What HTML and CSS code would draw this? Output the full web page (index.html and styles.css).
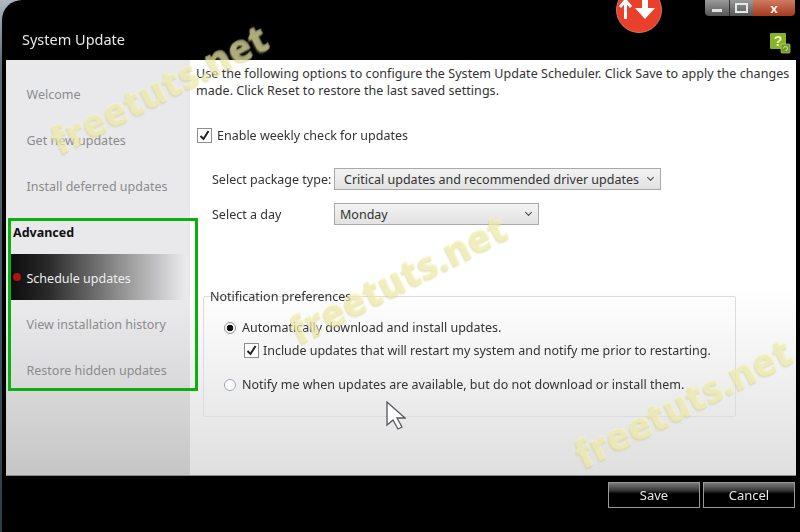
FILE: index.html
```html
<!DOCTYPE html>
<html lang="en">

<head>
    <meta charset="UTF-8">
    <title>System Update</title>
    <link rel="stylesheet" href="styles.css">
</head>

<body>
    <div class="window">
        <header class="titlebar">
            <h1 class="title">System Update</h1>
            <div class="badge">
                <svg width="46" height="46" viewBox="0 0 46 46">
                    <circle cx="23" cy="23" r="22.5" fill="#e8402a" stroke="#f08a70" stroke-width=".8" />
                    <path d="M9.5 32V14M4 20l5.5-6.5L15 20" fill="none" stroke="#fff" stroke-width="3" />
                    <path d="M26 8h6v13h7L29 32 19 21h7z" fill="#fff" />
                </svg>
            </div>
            <div class="controls">
                <span class="ctl ctl-min"><i></i></span>
                <span class="ctl ctl-max"><i></i></span>
                <span class="ctl ctl-close">x</span>
            </div>
            <svg class="help" width="22" height="22" viewBox="0 0 22 22">
                <rect x="1" y="1" width="16" height="16" rx="1" fill="#86b32a" />
                <text x="9" y="14" text-anchor="middle" class="help-mark">?</text>
                <rect x="12" y="12" width="9" height="9" rx="1" fill="#6d9a22" stroke="#cfe39a" stroke-width=".6" />
                <path d="M14.5 16.5a2 2 0 1 1 2 2" fill="none" stroke="#dfeeb5" stroke-width="1" />
            </svg>
        </header>

        <div class="body">
            <nav class="sidebar">
                <a class="nav-item">Welcome</a>
                <a class="nav-item">Get new updates</a>
                <a class="nav-item">Install deferred updates</a>
                <div class="nav-head">Advanced</div>
                <a class="nav-item selected">Schedule updates</a>
                <a class="nav-item">View installation history</a>
                <a class="nav-item">Restore hidden updates</a>
            </nav>

            <main class="main">
                <p class="intro">Use the following options to configure the System Update Scheduler. Click Save to apply the changes made. Click Reset to restore the last saved settings.</p>

                <label class="check-row weekly"><span class="check"><svg width="11" height="11" viewBox="0 0 11 11"><path d="M1.5 6l3 3 5-8" fill="none" stroke="#222" stroke-width="2" /></svg></span>Enable weekly check for updates</label>

                <div class="field package">
                    <span class="field-label">Select package type:</span>
                    <div class="select select-wide">Critical updates and recommended driver updates<span class="arrow"></span></div>
                </div>
                <div class="field day">
                    <span class="field-label">Select a day</span>
                    <div class="select select-day">Monday<span class="arrow"></span></div>
                </div>

                <section class="group">
                    <div class="legend">Notification preferences</div>
                    <label class="radio-row"><span class="radio on"></span>Automatically download and install updates.</label>
                    <label class="check-row nested"><span class="check"><svg width="11" height="11" viewBox="0 0 11 11"><path d="M1.5 6l3 3 5-8" fill="none" stroke="#222" stroke-width="2" /></svg></span>Include updates that will restart my system and notify me prior to restarting.</label>
                    <label class="radio-row second"><span class="radio"></span>Notify me when updates are available, but do not download or install them.</label>
                </section>
            </main>
        </div>

        <footer class="footer">
            <button class="btn">Save</button>
            <button class="btn">Cancel</button>
        </footer>
    </div>

    <!-- things lying over the window -->
    <div class="highlight"></div>
    <svg class="cursor" width="20" height="30" viewBox="0 0 20 30">
        <path d="M1 1v23l6-5 5 9 4-2-5-9h8z" fill="#fff" stroke="#55585c" stroke-width="1.3" />
    </svg>
    <div class="mark mark-1">freetuts.net</div>
    <div class="mark mark-2">freetuts.net</div>
    <div class="mark mark-3">freetuts.net</div>
</body>

</html>
```

FILE: styles.css
```css
html,
body {
    margin: 0;
    padding: 0;
}

body {
    width: 800px;
    height: 532px;
    overflow: hidden;
    position: relative;
    background: linear-gradient(#aeb8c0 0, #5c6c78 12%, #2c3d4a 100%);
    font-family: "Noto Sans", "Open Sans", sans-serif;
    font-size: 12.5px;
    color: #333;
}

.window {
    height: 532px;
    margin-left: 2px;
    display: flex;
    flex-direction: column;
    background: #000;
    border-top-left-radius: 20px;
    overflow: hidden;
    filter: blur(.35px);
}

.titlebar {
    height: 60px;
    flex: none;
    position: relative;
}

.title {
    margin: 0;
    padding: 29px 0 0 20px;
    font-size: 14.5px;
    font-weight: 400;
    color: #e8e8e8;
}

.badge {
    position: absolute;
    left: 614px;
    top: -13px;
    width: 46px;
    height: 46px;
}

.controls {
    position: absolute;
    left: 703px;
    top: 0;
    width: 90px;
    height: 16px;
    display: flex;
    border-radius: 0 0 4px 4px;
}

.ctl {
    height: 16px;
    display: flex;
    align-items: center;
    justify-content: center;
    background: linear-gradient(#9a9a9a, #555);
}

.ctl-min {
    width: 24px;
    border-bottom-left-radius: 4px;
}

.ctl-min i {
    width: 10px;
    height: 3px;
    margin-top: 5px;
    background: #e2e2e2;
}

.ctl-max {
    width: 23px;
    border-left: 1px solid #333;
}

.ctl-max i {
    width: 9px;
    height: 6px;
    border: 2px solid #e8e8e8;
}

.ctl-close {
    flex: 1;
    background: linear-gradient(#cf7a60, #a63a1d);
    border-bottom-right-radius: 4px;
    color: #f4ece6;
    font-weight: 700;
    font-size: 13px;
    line-height: 16px;
}

.help {
    position: absolute;
    left: 767px;
    top: 32px;
}

.help-mark {
    font-family: "Liberation Sans", sans-serif;
    font-size: 14px;
    font-weight: 700;
    fill: #f4f8c0;
}

.body {
    flex: none;
    height: 416px;
    display: flex;
    margin: 0 4px 0 4px;
    border-bottom: 1px solid #8a8a8a;
    box-sizing: border-box;
}

.sidebar {
    width: 184px;
    flex: none;
    box-sizing: border-box;
    padding-top: 10px;
    background: linear-gradient(#e9e9ec 0, #e9e9ec 60%, #c6c6c6 100%);
}

.nav-item,
.nav-head {
    display: block;
    height: 46px;
    line-height: 50px;
    box-sizing: border-box;
    padding-left: 20.5px;
    color: #8b8b8d;
    white-space: nowrap;
}

.nav-head {
    padding-left: 7px;
    color: #111;
    font-weight: 700;
}

.nav-item.selected {
    position: relative;
    margin-left: 2px;
    padding-left: 18.5px;
    color: #eee;
    background: linear-gradient(90deg, #0a0a0a 0, #2a2a2a 22%, #8c8c8c 60%, #e9e9ec 97%);
}

.nav-item.selected::before {
    content: "";
    position: absolute;
    left: 5px;
    top: 19px;
    width: 8px;
    height: 8px;
    border-radius: 50%;
    background: #b01010;
}

.main {
    flex: 1;
    box-sizing: border-box;
    padding: 5px 0 0 6px;
    background: linear-gradient(#fff 0, #fff 55%, #dfdfdf 100%);
}

.intro {
    margin: 0;
    line-height: 17px;
    letter-spacing: .05px;
}

.check-row,
.radio-row {
    display: flex;
    align-items: center;
    white-space: nowrap;
}

.check {
    width: 13px;
    height: 13px;
    flex: none;
    display: flex;
    align-items: center;
    justify-content: center;
    border: 1px solid #8e8e8e;
    background: #fff;
    margin-right: 5px;
}

.weekly {
    margin: 29px 0 0 1px;
    height: 15px;
}

.field {
    display: flex;
    align-items: center;
    height: 22px;
}

.package {
    margin-top: 25px;
}

.day {
    margin-top: 13px;
}

.field-label {
    width: 122px;
    flex: none;
    margin-left: 16px;
    white-space: nowrap;
}

.select {
    height: 22px;
    box-sizing: border-box;
    position: relative;
    border: 1px solid #a9a9a9;
    background: linear-gradient(#f3f3f3, #e2e2e2);
    line-height: 21px;
    white-space: nowrap;
}

.select-wide {
    width: 327px;
    padding-left: 9px;
}

.select-day {
    width: 205px;
    padding-left: 5px;
}

.arrow {
    position: absolute;
    right: 7px;
    top: 6px;
    width: 4px;
    height: 4px;
    border-right: 1px solid #444;
    border-bottom: 1px solid #444;
    transform: rotate(45deg);
}

.group {
    position: relative;
    width: 533px;
    height: 121px;
    box-sizing: border-box;
    margin: 71px 0 0 7px;
    padding: 22px 0 0 20px;
    border: 1px solid #dcdcdc;
    border-radius: 2px;
}

.legend {
    position: absolute;
    left: 6px;
    top: -9px;
    line-height: 17px;
    padding-right: 2px;
}

.radio {
    width: 12px;
    height: 12px;
    flex: none;
    box-sizing: border-box;
    border: 1px solid #9aa3b5;
    border-radius: 50%;
    background: #fff;
    margin-right: 6px;
}

.radio.on {
    border-color: #8e8e8e;
    background: radial-gradient(circle, #111 0, #111 3px, #fff 3.6px);
}

.radio-row {
    height: 17px;
}

.nested {
    height: 17px;
    margin: 6px 0 0 20px;
    letter-spacing: -.02px;
}

.nested .check {
    margin-right: 4px;
}

.second {
    margin-top: 17px;
}

.footer {
    flex: 1;
    display: flex;
    justify-content: flex-end;
    gap: 3px;
    padding: 6px 5px 0 0;
}

.btn {
    width: 92px;
    height: 26px;
    padding: 0;
    border: 1px solid #9a9a9a;
    background: linear-gradient(#7a7a7a 0, #3a3a3a 30%, #000 45%);
    color: #e6e6e6;
    font-family: inherit;
    font-size: 13px;
}

.highlight {
    position: absolute;
    left: 8px;
    top: 218px;
    width: 190px;
    height: 173px;
    box-sizing: border-box;
    border: 3px solid #0bb00f;
}

.cursor {
    position: absolute;
    left: 386px;
    top: 401px;
}

.mark {
    position: absolute;
    width: 246px;
    text-align: center;
    font-family: "Open Sans", sans-serif;
    font-size: 38px;
    font-weight: 800;
    line-height: 36px;
    white-space: nowrap;
    color: rgba(250, 248, 190, .5);
    text-shadow: -1px 1px 0 rgba(205, 200, 120, .35), -2px 2px 1px rgba(205, 200, 120, .2);
    transform: rotate(-27deg);
}

.mark-1 {
    left: 36px;
    top: 70px;
}

.mark-2 {
    left: 275px;
    top: 260px;
}

.mark-3 {
    left: 560px;
    top: 384px;
}
```
